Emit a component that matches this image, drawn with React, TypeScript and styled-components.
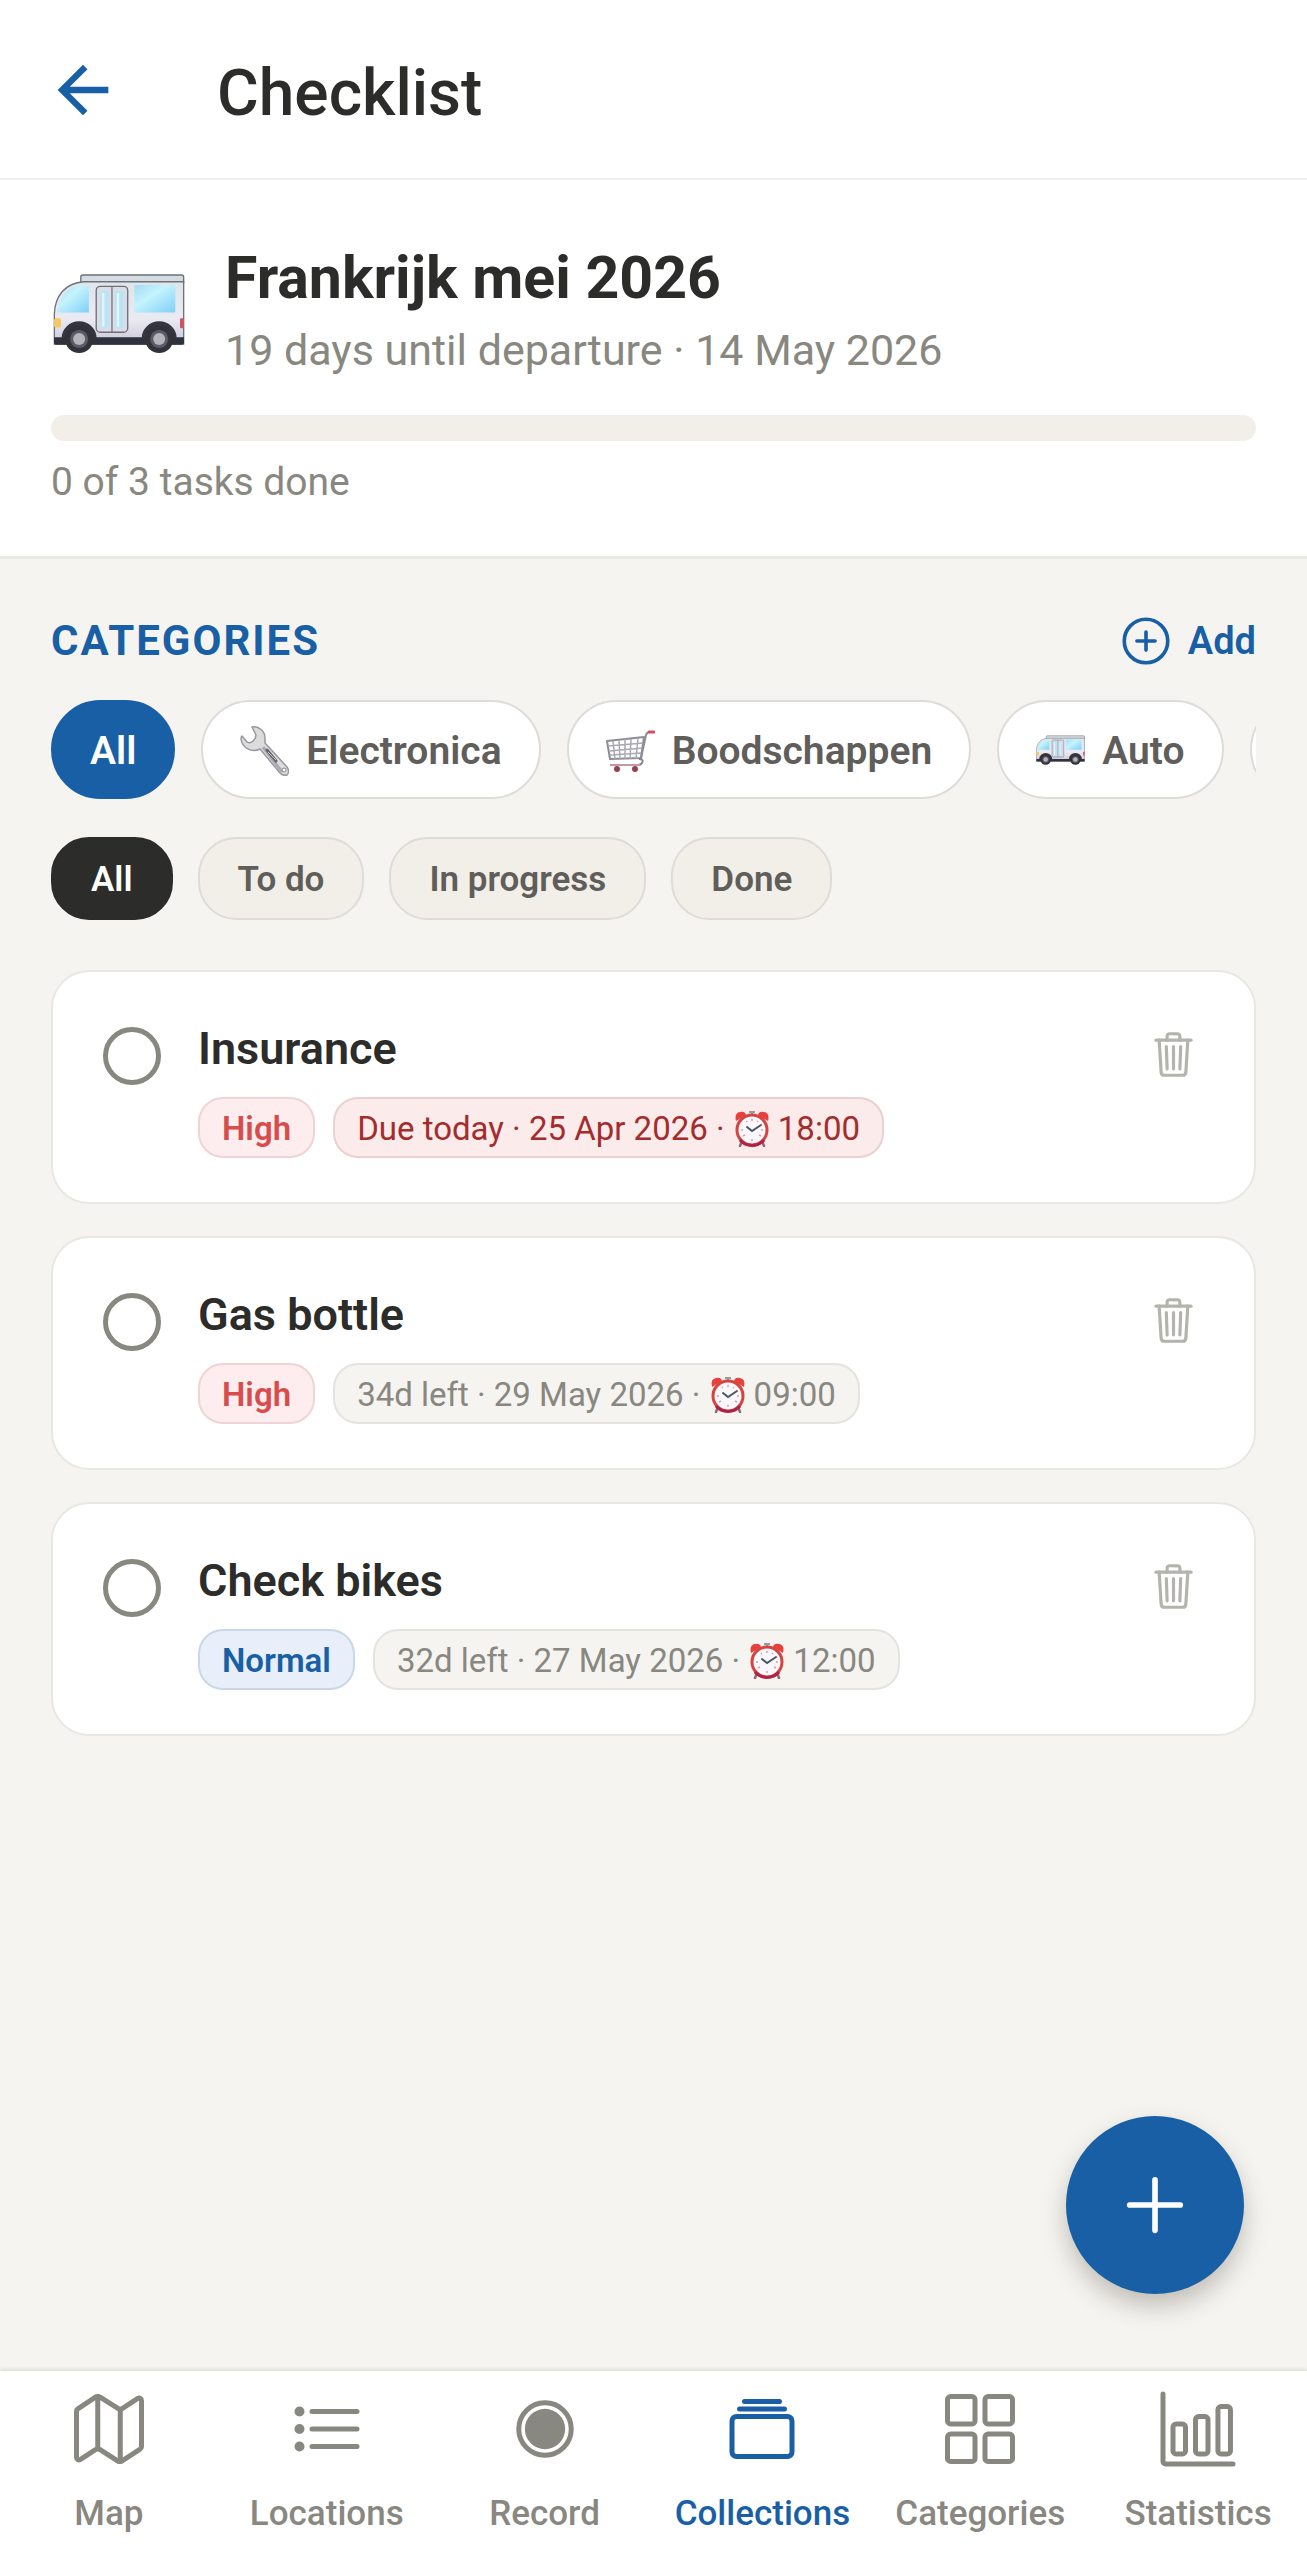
import React, { useId, useState } from "react";
import styled, { createGlobalStyle, css } from "styled-components";
import {
  IoAdd,
  IoAddCircleOutline,
  IoAlbumsOutline,
  IoBarChartOutline,
  IoGridOutline,
  IoListOutline,
  IoMapOutline,
  IoTrashOutline,
} from "react-icons/io5";
import { MdArrowBack } from "react-icons/md";

type Status = "all" | "todo" | "progress" | "done";
type Tone = "high" | "normal" | "due" | "plain";

type Task = {
  id: string;
  title: string;
  priority: "High" | "Normal";
  due: string;
  time: string;
  isDueToday?: boolean;
};

const TASKS: Task[] = [
  {
    id: "insurance",
    title: "Insurance",
    priority: "High",
    due: "Due today · 25 Apr 2026",
    time: "18:00",
    isDueToday: true,
  },
  { id: "gas", title: "Gas bottle", priority: "High", due: "34d left · 29 May 2026", time: "09:00" },
  { id: "bikes", title: "Check bikes", priority: "Normal", due: "32d left · 27 May 2026", time: "12:00" },
];

const STATUSES: { key: Status; label: string }[] = [
  { key: "all", label: "All" },
  { key: "todo", label: "To do" },
  { key: "progress", label: "In progress" },
  { key: "done", label: "Done" },
];

const VanIcon = ({ width }: { width: number }) => {
  const id = useId();
  return (
    <svg width={width} viewBox="0 0 394 242" aria-hidden="true">
      <defs>
        <linearGradient id={`${id}body`} x1="0" y1="0" x2="0" y2="1">
          <stop offset="0" stopColor="#dfe5ea" />
          <stop offset="0.6" stopColor="#ebeaf3" />
          <stop offset="1" stopColor="#c9c7d6" />
        </linearGradient>
        <linearGradient id={`${id}glass`} x1="0" y1="0" x2="1" y2="1">
          <stop offset="0" stopColor="#a5dbf5" />
          <stop offset="0.4" stopColor="#c5f3fd" />
          <stop offset="1" stopColor="#7fd0f8" />
        </linearGradient>
      </defs>
      <rect x="83" y="6" width="307" height="28" rx="6" fill="#d5dce1" stroke="#68717a" strokeWidth="4" />
      <path
        d="M4 122C6 70 34 30 92 26H390V212H4Z"
        fill={`url(#${id}body)`}
        stroke="#6b737c"
        strokeWidth="4"
      />
      <path d="M12 118C16 76 38 44 78 38H107V118Z" fill={`url(#${id}glass)`} />
      <rect x="243" y="36" width="122" height="82" rx="3" fill={`url(#${id}glass)`} />
      <rect x="129" y="40" width="94" height="137" rx="12" fill="#d9dde5" stroke="#6f7078" strokeWidth="4" />
      <rect x="142" y="54" width="24" height="110" rx="6" fill="#b9e4f8" />
      <rect x="186" y="54" width="24" height="110" rx="6" fill="#b9e4f8" />
      <path d="M150 60V160M194 60V160" stroke="#e6f6fe" strokeWidth="7" />
      <path d="M176 41V177" stroke="#77777f" strokeWidth="4" />
      <path d="M3 192H391V208Q391 214 385 214H9Q3 214 3 208Z" fill="#30313e" />
      <rect x="3" y="135" width="21" height="28" rx="5" fill="#f6c768" />
      <rect x="379" y="135" width="12" height="30" rx="4" fill="#cb5561" />
      <path d="M26 194A52 50 0 0 1 130 194ZM265 194A52 50 0 0 1 369 194Z" fill="#35353f" />
      <circle cx="78" cy="197" r="42" fill="#32323b" />
      <circle cx="317" cy="197" r="42" fill="#32323b" />
      <circle cx="78" cy="197" r="27" fill="#5b5b62" />
      <circle cx="317" cy="197" r="27" fill="#5b5b62" />
      <circle cx="78" cy="197" r="18" fill="#b5b3bd" />
      <circle cx="317" cy="197" r="18" fill="#b5b3bd" />
    </svg>
  );
};

const WrenchIcon = () => (
  <svg width="49" height="50" viewBox="0 0 49 50" aria-hidden="true">
    <path
      d="M12 1C19 0 25 5 25 12C25 14 25 15 25 17L47 41C49 44 49 47 47 49C44 50 42 49 40 47L20 23C12 27 2 22 1 13C1 12 1 11 2 10L7 16Q10 18 13 15T16 9Z"
      fill="#dcdcdd"
      stroke="#98989c"
      strokeWidth="1.5"
      strokeLinejoin="round"
    />
    <path d="M23 21L42 46" stroke="#aaaab2" strokeWidth="3" />
    <path d="M27 24L36 35" stroke="#66666b" strokeWidth="3" strokeLinecap="round" />
    <path d="M28 26L36 34" stroke="#c8c8cc" strokeWidth="1" />
    <circle cx="44" cy="44" r="2" fill="#fff" stroke="#85858a" />
  </svg>
);

const CartIcon = () => (
  <svg width="49" height="42" viewBox="0 0 49 42" fill="none" aria-hidden="true">
    <path d="M1 11L38 7L35 28L4 29Z" stroke="#8d8d96" strokeWidth="2" strokeLinejoin="round" />
    <path
      d="M2 16L37 13M3 21L37 18M4 25L36 23M7 11L9 29M13 10L14 29M19 9L19 29M25 9L24 29M32 8L30 29"
      stroke="#a9a9b1"
      strokeWidth="1.5"
    />
    <path d="M35 28L40 5Q41 2 44 2" stroke="#8d8d96" strokeWidth="2" />
    <path d="M33 29Q38 29 36 33Q35 35 32 35" stroke="#85858f" strokeWidth="2" />
    <path d="M4 35H34" stroke="#c898a2" strokeWidth="2" />
    <path d="M43 2H48" stroke="#d0505c" strokeWidth="3" strokeLinecap="round" />
    <circle cx="11" cy="39" r="3" fill="#963f50" />
    <circle cx="29" cy="39" r="3" fill="#963f50" />
  </svg>
);

const ClockIcon = () => (
  <ClockSvg viewBox="1 0 38 36" aria-hidden="true">
    <path d="M10 30L8 35M30 30L32 35" stroke="#8d6870" strokeWidth="2.5" strokeLinecap="round" />
    <path d="M4 10Q2 2 8 1Q13 0 14 4ZM36 10Q38 2 32 1Q27 0 26 4Z" fill="#e8403c" />
    <path d="M20 1V5M17 1H23" stroke="#9a9a9e" strokeWidth="2" />
    <circle cx="20" cy="19" r="15" fill="#fbf8fd" stroke="#d4453f" strokeWidth="3" />
    <path d="M8 29A16 16 0 0 0 32 29" stroke="#b02347" strokeWidth="3" fill="none" />
    <path
      d="M20 8V10M20 28V30M9 19H11M29 19H31M14 10L15 11M26 10L25 11M11 25L13 24M29 25L27 24"
      stroke="#e49aa0"
      strokeWidth="1.5"
    />
    <path d="M15 16L20 20L29 14" stroke="#4a5563" strokeWidth="2" fill="none" strokeLinecap="round" />
  </ClockSvg>
);

const RecordIcon = () => (
  <svg viewBox="0 0 512 512" aria-hidden="true">
    <circle cx="256" cy="256" r="168" fill="none" stroke="currentColor" strokeWidth="32" />
    <circle cx="256" cy="256" r="129" fill="currentColor" />
  </svg>
);

const CATEGORIES: { key: string; label: string; icon?: React.ReactNode }[] = [
  { key: "all", label: "All" },
  { key: "electronica", label: "Electronica", icon: <WrenchIcon /> },
  { key: "boodschappen", label: "Boodschappen", icon: <CartIcon /> },
  { key: "auto", label: "Auto", icon: <VanIcon width={49} /> },
];

const NAV_ITEMS = [
  { key: "map", label: "Map", icon: <IoMapOutline /> },
  { key: "locations", label: "Locations", icon: <IoListOutline /> },
  { key: "record", label: "Record", icon: <RecordIcon /> },
  { key: "collections", label: "Collections", icon: <IoAlbumsOutline /> },
  { key: "categories", label: "Categories", icon: <IoGridOutline /> },
  { key: "statistics", label: "Statistics", icon: <IoBarChartOutline /> },
];

const App = () => {
  const [category, setCategory] = useState("all");
  const [status, setStatus] = useState<Status>("all");
  const [tasks, setTasks] = useState(TASKS);
  const [doneIds, setDoneIds] = useState<string[]>([]);

  const toggleTask = (id: string) => {
    setDoneIds((prev) => (prev.includes(id) ? prev.filter((item) => item !== id) : [...prev, id]));
  };

  const removeTask = (id: string) => {
    setTasks((prev) => prev.filter((task) => task.id !== id));
    setDoneIds((prev) => prev.filter((item) => item !== id));
  };

  const visibleTasks = tasks.filter((task) => {
    if (status === "done") return doneIds.includes(task.id);
    if (status === "todo") return !doneIds.includes(task.id);
    return status === "all";
  });
  const percent = tasks.length ? (doneIds.length / tasks.length) * 100 : 0;

  return (
    <>
      <GlobalStyle />
      <Page>
        <Header>
          <BackButton type="button" aria-label="Back">
            <MdArrowBack />
          </BackButton>
          <PageTitle>Checklist</PageTitle>
        </Header>

        <Trip>
          <TripInfo>
            <TripIcon>
              <VanIcon width={132} />
            </TripIcon>
            <div>
              <TripName>Frankrijk mei 2026</TripName>
              <TripDate>19 days until departure · 14 May 2026</TripDate>
            </div>
          </TripInfo>
          <Track role="progressbar" aria-label="Tasks done" aria-valuenow={percent}>
            <Fill style={{ width: `${percent}%` }} />
          </Track>
          <Progress>
            {doneIds.length} of {tasks.length} tasks done
          </Progress>
        </Trip>

        <Main>
          <SectionHead>
            <SectionTitle>CATEGORIES</SectionTitle>
            <AddButton type="button">
              <IoAddCircleOutline />
              Add
            </AddButton>
          </SectionHead>

          <CategoryRow>
            {CATEGORIES.map((item) => (
              <CategoryChip
                key={item.key}
                type="button"
                $active={category === item.key}
                aria-pressed={category === item.key}
                onClick={() => setCategory(item.key)}
              >
                {item.icon}
                {item.label}
              </CategoryChip>
            ))}
            <CategoryChip type="button" $active={false} aria-label="More categories">
              <IoAdd />
            </CategoryChip>
          </CategoryRow>

          <StatusRow>
            {STATUSES.map((item) => (
              <StatusChip
                key={item.key}
                type="button"
                $active={status === item.key}
                aria-pressed={status === item.key}
                onClick={() => setStatus(item.key)}
              >
                {item.label}
              </StatusChip>
            ))}
          </StatusRow>

          <TaskList>
            {visibleTasks.map((task) => (
              <TaskCard key={task.id}>
                <Check
                  type="checkbox"
                  id={`task-${task.id}`}
                  checked={doneIds.includes(task.id)}
                  onChange={() => toggleTask(task.id)}
                />
                <TaskBody>
                  <TaskTitle htmlFor={`task-${task.id}`}>{task.title}</TaskTitle>
                  <Badges>
                    <Badge $tone={task.priority === "High" ? "high" : "normal"}>{task.priority}</Badge>
                    <Badge $tone={task.isDueToday ? "due" : "plain"}>
                      {task.due} · <ClockIcon />
                      {task.time}
                    </Badge>
                  </Badges>
                </TaskBody>
                <DeleteButton
                  type="button"
                  aria-label={`Delete ${task.title}`}
                  onClick={() => removeTask(task.id)}
                >
                  <IoTrashOutline />
                </DeleteButton>
              </TaskCard>
            ))}
          </TaskList>

          <Fab type="button" aria-label="New task">
            <IoAdd />
          </Fab>
        </Main>

        <BottomNav>
          {NAV_ITEMS.map((item) => {
            const isActive = item.key === "collections";
            return (
              <NavLink
                key={item.key}
                href={`#${item.key}`}
                $active={isActive}
                aria-current={isActive ? "page" : undefined}
              >
                {item.icon}
                {item.label}
              </NavLink>
            );
          })}
        </BottomNav>
      </Page>
    </>
  );
};

const GlobalStyle = createGlobalStyle`
  * {
    box-sizing: border-box;
  }

  body {
    margin: 0;
    background: #f5f4f0;
    color: #2c2c2a;
    font-family: Roboto, "Liberation Sans", sans-serif;
  }

  button {
    font-family: inherit;
    cursor: pointer;
  }

  h1, h2, p, ul {
    margin: 0;
    padding: 0;
  }

  svg {
    flex-shrink: 0;
  }
`;

const Page = styled.div`
  display: flex;
  flex-direction: column;
  min-height: 100vh;
`;

/* Header */
const Header = styled.header`
  display: flex;
  align-items: center;
  gap: 96px;
  height: 180px;
  padding: 2px 45px 0;
  background: #fff;
  border-bottom: 2px solid #f0efeb;
`;

const BackButton = styled.button`
  display: flex;
  padding: 0;
  border: 0;
  background: none;
  color: #185fa5;

  svg {
    width: 76px;
    height: 76px;
  }
`;

const PageTitle = styled.h1`
  font-size: 64px;
  font-weight: 500;
  line-height: 76px;
  padding-top: 8px;
`;

/* Trip summary */
const Trip = styled.section`
  padding: 64px 51px 51px;
  background: #fff;
  border-bottom: 3px solid #ebeae6;
`;

const TripInfo = styled.div`
  display: flex;
  align-items: center;
  gap: 40px;
`;

const TripIcon = styled.div`
  display: flex;
  padding: 9px 0 0 2px;
`;

const TripName = styled.h2`
  font-size: 59px;
  font-weight: 700;
  line-height: 68px;
`;

const TripDate = styled.p`
  margin-top: 13px;
  color: #888780;
  font-size: 43px;
  line-height: 50px;
`;

const Track = styled.div`
  height: 26px;
  margin-top: 40px;
  border-radius: 13px;
  background: #f1efe8;
  overflow: hidden;
`;

const Fill = styled.div`
  height: 100%;
  background: #185fa5;
`;

const Progress = styled.p`
  margin-top: 18px;
  color: #888780;
  font-size: 39px;
  line-height: 46px;
`;

/* Categories and filters */
const Main = styled.main`
  position: relative;
  flex: 1;
  padding: 50px 51px;
`;

const SectionHead = styled.div`
  display: flex;
  align-items: center;
  justify-content: space-between;
  height: 64px;
`;

const SectionTitle = styled.h2`
  color: #185fa5;
  font-size: 42px;
  font-weight: 700;
  line-height: 50px;
  letter-spacing: 2px;
`;

const AddButton = styled.button`
  display: flex;
  align-items: center;
  gap: 13px;
  padding: 0;
  border: 0;
  background: none;
  color: #185fa5;
  font-size: 38px;
  font-weight: 600;
  line-height: 46px;

  svg {
    width: 58px;
    height: 58px;
  }
`;

const chip = css`
  display: flex;
  flex-shrink: 0;
  align-items: center;
  border: 2px solid #dddcd8;
  color: #5f5e5a;
  font-weight: 600;
  white-space: nowrap;
`;

const CategoryRow = styled.div`
  display: flex;
  gap: 26px;
  margin-top: 27px;
  overflow-x: auto;
  scrollbar-width: none;
`;

const CategoryChip = styled.button<{ $active: boolean }>`
  ${chip}
  gap: 17px;
  height: 99px;
  padding: 2px 37px 0;
  border-radius: 50px;
  background: #fff;
  font-size: 39px;
  line-height: 46px;

  ${({ $active }) =>
    $active &&
    css`
      border-color: #185fa5;
      background: #185fa5;
      color: #fff;
    `}
`;

const StatusRow = styled.div`
  display: flex;
  gap: 25px;
  margin-top: 38px;
`;

const StatusChip = styled.button<{ $active: boolean }>`
  ${chip}
  height: 83px;
  padding: 2px 38px 0;
  border-radius: 38px;
  background: #f1efe8;
  font-size: 35px;
  line-height: 42px;

  ${({ $active }) =>
    $active &&
    css`
      border-color: #2c2c2a;
      background: #2c2c2a;
      color: #fff;
    `}
`;

/* Tasks */
const TaskList = styled.ul`
  display: flex;
  flex-direction: column;
  gap: 32px;
  margin-top: 50px;
  list-style: none;
`;

const TaskCard = styled.li`
  display: flex;
  align-items: flex-start;
  gap: 37px;
  padding: 51px 50px 44px;
  border: 2px solid #e8e7e3;
  border-radius: 38px;
  background: #fff;
`;

const Check = styled.input`
  flex-shrink: 0;
  width: 58px;
  height: 58px;
  margin: 4px 0 0;
  border: 5px solid #888780;
  border-radius: 50%;
  appearance: none;

  &:checked {
    border-color: #185fa5;
    background: #185fa5;
  }
`;

const TaskBody = styled.div`
  flex: 1;
`;

const TaskTitle = styled.label`
  display: block;
  font-size: 45px;
  font-weight: 600;
  line-height: 52px;
`;

const Badges = styled.div`
  display: flex;
  gap: 18px;
  margin-top: 22px;
`;

const TONES: Record<Tone, string> = {
  high: "background: #fdedef; border-color: #f0d3d5; color: #d84c4c; font-weight: 600;",
  normal: "background: #e8effa; border-color: #c8d8e4; color: #185fa5; font-weight: 600;",
  due: "background: #fcebeb; border-color: #ead0d0; color: #a32d2d;",
  plain: "background: #f5f4f0; border-color: #e4e3df; color: #888780;",
};

const Badge = styled.span<{ $tone: Tone }>`
  padding: 11px 22px 8px;
  border: 2px solid;
  border-radius: 25px;
  font-size: 33px;
  line-height: 38px;
  white-space: nowrap;
  ${({ $tone }) => TONES[$tone]}
`;

const ClockSvg = styled.svg`
  width: 38px;
  height: 36px;
  margin-right: 7px;
  vertical-align: -7px;
`;

const DeleteButton = styled.button`
  display: flex;
  margin: 6px 5px 0 0;
  padding: 0;
  border: 0;
  background: none;
  color: #b4b4ad;

  svg {
    width: 51px;
    height: 51px;
  }
`;

const Fab = styled.button`
  position: absolute;
  right: 63px;
  bottom: 77px;
  display: flex;
  align-items: center;
  justify-content: center;
  width: 178px;
  height: 178px;
  border: 0;
  border-radius: 50%;
  background: #185fa5;
  box-shadow: 0 12px 24px rgba(60, 50, 40, 0.28);
  color: #fff;

  svg {
    width: 90px;
    height: 90px;
  }
`;

/* Bottom navigation */
const BottomNav = styled.nav`
  display: grid;
  grid-template-columns: repeat(6, 1fr);
  height: 189px;
  padding-top: 18px;
  background: #fff;
  box-shadow: 0 -1px 4px rgba(60, 50, 40, 0.16);
`;

const NavLink = styled.a<{ $active: boolean }>`
  display: flex;
  flex-direction: column;
  align-items: center;
  gap: 24px;
  color: ${({ $active }) => ($active ? "#185fa5" : "#888780")};
  font-size: 35px;
  font-weight: 500;
  line-height: 42px;
  text-decoration: none;

  svg {
    width: 80px;
    height: 80px;
  }
`;

export default App;
